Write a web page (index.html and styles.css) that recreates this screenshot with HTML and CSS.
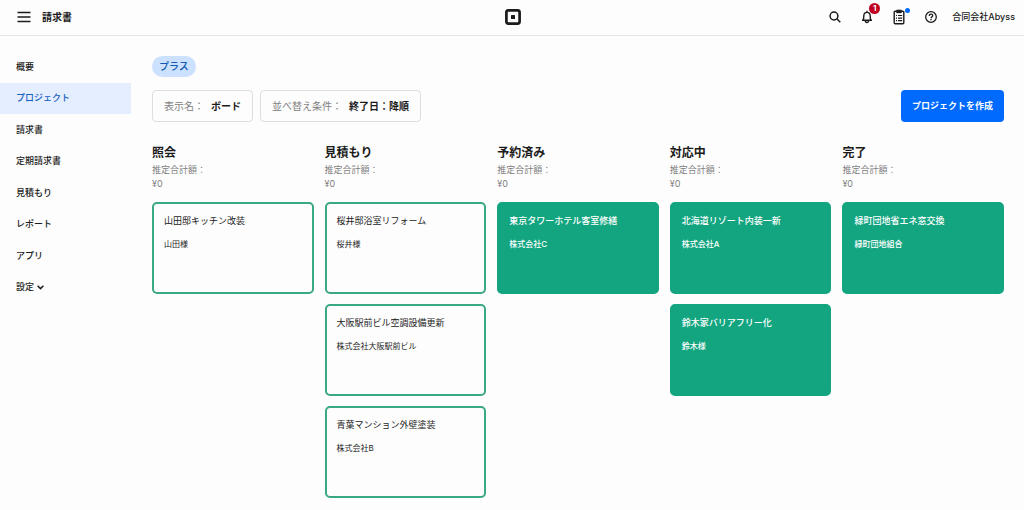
FILE: index.html
```html
<!DOCTYPE html>
<html lang="ja">
<head>
<meta charset="utf-8">
<meta name="viewport" content="width=device-width, initial-scale=1">
<title>プロジェクト</title>
<link rel="stylesheet" href="styles.css">
</head>
<body>
<header class="topbar">
  <div class="topbar-start">
    <button class="icon-button" type="button" aria-label="メニュー">
      <svg width="14" height="14" viewBox="0 0 14 14" fill="none" stroke="currentColor" stroke-width="1.4"><path d="M.5 2.5h13M.5 7h13M.5 11.5h13"/></svg>
    </button>
    <span class="topbar-title">請求書</span>
  </div>
  <a class="logo" href="#" aria-label="ホーム">
    <svg width="16" height="16" viewBox="0 0 16 16"><rect x="1.4" y="1.4" width="13.2" height="13.2" rx="2" fill="none" stroke="currentColor" stroke-width="2.7"/><rect x="6" y="6" width="4" height="4" rx=".5" fill="currentColor"/></svg>
  </a>
  <div class="topbar-end">
    <button class="icon-button" type="button" aria-label="検索">
      <svg width="12" height="12" viewBox="0 0 12 12" fill="none" stroke="currentColor" stroke-width="1.5"><circle cx="5" cy="5" r="3.9"/><path d="M7.8 7.8l3.5 3.5"/></svg>
    </button>
    <button class="icon-button" type="button" aria-label="通知">
      <svg width="12" height="14" viewBox="0 0 12 14" fill="none" stroke="currentColor" stroke-width="1.4"><path d="M1 10.3h10M2.2 10.1C2.8 8.8 2.7 7.4 2.8 5.9 2.9 3.6 4 2.4 6 2.4s3.1 1.2 3.2 3.5c.1 1.5 0 2.9.6 4.2M6 .8v1.6M4.3 10.5c0 2.6 3.4 2.6 3.4 0"/></svg>
      <span class="badge">1</span>
    </button>
    <button class="icon-button" type="button" aria-label="タスク">
      <svg width="12" height="16" viewBox="0 0 12 16" fill="none" stroke="currentColor" stroke-width="1.4"><path d="M3.5 2.2H2.2a1 1 0 0 0-1 1v10.6a1 1 0 0 0 1 1h7.6a1 1 0 0 0 1-1V3.2a1 1 0 0 0-1-1H8.5"/><path d="M3.7 1.2h4.6v2.5H3.7z" fill="currentColor" stroke-width="1"/><path d="M3 6.5h1M5 6.5h4.2M3 9.1h1M5 9.1h4.2M3 11.7h1M5 11.7h4.2" stroke-width="1.2"/></svg>
      <span class="dot"></span>
    </button>
    <button class="icon-button" type="button" aria-label="ヘルプ">
      <svg width="12" height="12" viewBox="0 0 12 12" fill="none" stroke="currentColor" stroke-width="1.3"><circle cx="6" cy="6" r="5.3"/><path d="M4.3 4.9C4.3 2.5 7.8 2.7 7.7 4.8 7.6 5.9 6 5.9 6 7.2"/><path d="M6 8v1.3"/></svg>
    </button>
    <button class="account" type="button">合同会社Abyss</button>
  </div>
</header>
<div class="layout">
  <nav class="sidebar">
    <a class="nav-item" href="#">概要</a>
    <a class="nav-item nav-item-active" href="#" aria-current="page">プロジェクト</a>
    <a class="nav-item" href="#">請求書</a>
    <a class="nav-item" href="#">定期請求書</a>
    <a class="nav-item" href="#">見積もり</a>
    <a class="nav-item" href="#">レポート</a>
    <a class="nav-item" href="#">アプリ</a>
    <a class="nav-item" href="#">設定
      <svg width="7" height="5" viewBox="0 0 7 5" fill="none" stroke="currentColor" stroke-width="1.5"><path d="M.6.8l2.9 2.8L6.4.8"/></svg>
    </a>
  </nav>
  <main class="main">
    <span class="tag">プラス</span>
    <div class="toolbar">
      <button class="filter" type="button"><span class="filter-label">表示名：</span><span class="filter-value">ボード</span></button>
      <button class="filter" type="button"><span class="filter-label">並べ替え条件：</span><span class="filter-value">終了日：降順</span></button>
      <button class="primary" type="button">プロジェクトを作成</button>
    </div>
    <div class="board">
      <section class="column">
        <header class="column-head"><h2 class="column-title">照会</h2><p class="column-total">推定合計額：<br>¥0</p></header>
        <article class="card"><h3 class="card-title">山田邸キッチン改装</h3><p class="card-client">山田様</p></article>
      </section>
      <section class="column">
        <header class="column-head"><h2 class="column-title">見積もり</h2><p class="column-total">推定合計額：<br>¥0</p></header>
        <article class="card"><h3 class="card-title">桜井邸浴室リフォーム</h3><p class="card-client">桜井様</p></article>
        <article class="card"><h3 class="card-title">大阪駅前ビル空調設備更新</h3><p class="card-client">株式会社大阪駅前ビル</p></article>
        <article class="card"><h3 class="card-title">青葉マンション外壁塗装</h3><p class="card-client">株式会社B</p></article>
      </section>
      <section class="column">
        <header class="column-head"><h2 class="column-title">予約済み</h2><p class="column-total">推定合計額：<br>¥0</p></header>
        <article class="card card-filled"><h3 class="card-title">東京タワーホテル客室修繕</h3><p class="card-client">株式会社C</p></article>
      </section>
      <section class="column">
        <header class="column-head"><h2 class="column-title">対応中</h2><p class="column-total">推定合計額：<br>¥0</p></header>
        <article class="card card-filled"><h3 class="card-title">北海道リゾート内装一新</h3><p class="card-client">株式会社A</p></article>
        <article class="card card-filled"><h3 class="card-title">鈴木家バリアフリー化</h3><p class="card-client">鈴木様</p></article>
      </section>
      <section class="column">
        <header class="column-head"><h2 class="column-title">完了</h2><p class="column-total">推定合計額：<br>¥0</p></header>
        <article class="card card-filled"><h3 class="card-title">緑町団地省エネ窓交換</h3><p class="card-client">緑町団地組合</p></article>
      </section>
    </div>
  </main>
</div>
</body>
</html>
```
FILE: styles.css
```css
* { box-sizing: border-box; }
body {
  margin: 0;
  background: #fdfdfd;
  color: #1b1b1b;
  font: 500 9px/14px Inter, "Noto Sans CJK JP", sans-serif;
}
h2, h3, p { margin: 0; }
button {
  margin: 0;
  padding: 0;
  border: 0;
  background: none;
  color: inherit;
  font: inherit;
  cursor: pointer;
}
a { color: inherit; text-decoration: none; }
svg { display: block; }

.topbar {
  display: grid;
  grid-template-columns: 1fr auto 1fr;
  align-items: center;
  height: 36px;
  padding: 0 9px 2px 10px;
  border-bottom: 1px solid #e6e6e6;
}
.topbar-start { display: flex; align-items: center; gap: 11px; padding-left: 7px; }
.topbar-title { font-size: 10px; font-weight: 700; }
.topbar-end { display: flex; align-items: center; justify-content: flex-end; gap: 20px; }
.icon-button { position: relative; }
.account { margin-left: -5px; }
.badge {
  position: absolute;
  top: -7px;
  left: 8px;
  width: 11px;
  height: 11px;
  border-radius: 50%;
  background: #bf0020;
  color: #fff;
  font-size: 8px;
  font-weight: 700;
  line-height: 11px;
  text-align: center;
}
.dot {
  position: absolute;
  top: -1px;
  right: -5px;
  width: 5px;
  height: 5px;
  border-radius: 50%;
  background: #006aff;
}

.layout { display: grid; grid-template-columns: 131px 1fr; column-gap: 21px; }
.sidebar {
  display: grid;
  grid-auto-rows: 1fr;
  align-self: start;
  min-height: 252px;
  margin-top: 15px;
}
.nav-item { display: flex; align-items: center; gap: 3px; padding-left: 16px; }
.nav-item-active { background: #e5eeff; color: #1560bd; }

.main { min-width: 0; padding: 20px 20px 12px 0; }
.tag {
  display: block;
  width: max-content;
  padding: 0 7px;
  border-radius: 11px;
  background: #cce1ff;
  color: #0f5aae;
  font-size: 10px;
  line-height: 21px;
}
.toolbar { display: flex; gap: 7px; margin-top: 13px; }
.filter {
  display: flex;
  align-items: center;
  gap: 7px;
  height: 32px;
  padding: 0 11px;
  border: 1px solid #dedede;
  border-radius: 4px;
  font-size: 10px;
}
.filter-label { color: #808080; font-weight: 400; }
.filter-value { font-weight: 700; }
.primary {
  height: 32px;
  margin-left: auto;
  padding: 0 11px;
  border-radius: 4px;
  background: #006aff;
  color: #fff;
  font-weight: 700;
}

.board {
  display: grid;
  grid-template-columns: repeat(5, minmax(0, 1fr));
  gap: 11px;
  margin-top: 22px;
}
.column { display: flex; flex-direction: column; gap: 10px; }
.column-title { margin-bottom: 1px; font-size: 12px; line-height: 18px; }
.column-total { color: #808080; font-weight: 400; }
.column-head { padding-bottom: 1px; }
.card {
  min-height: 92px;
  padding: 10px;
  border: 2px solid #3ba884;
  border-radius: 5px;
  background: #fdfdfd;
}
.card-title { font-size: 9px; font-weight: 400; }
.card-client { margin-top: 9px; font-size: 8px; font-weight: 400; }
.card-filled { border-color: #12a580; background: #12a580; color: #fff; }
.card-filled .card-title, .card-filled .card-client { font-weight: 500; }
```
